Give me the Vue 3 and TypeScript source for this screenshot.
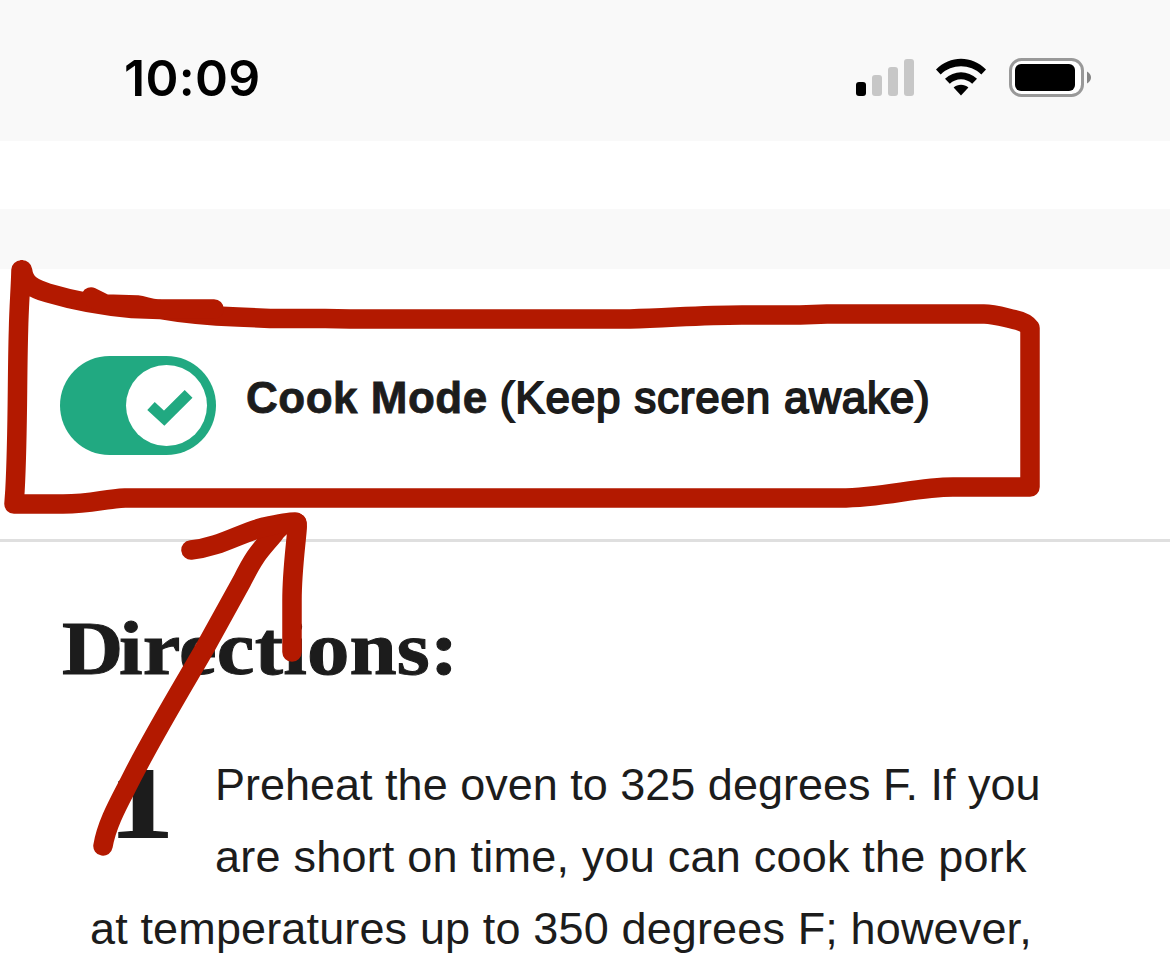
<template>
  <div class="screen">
    <header class="status-bar">
      <time class="clock">10:09</time>
      <div class="status-icons">
        <svg class="signal" width="60" height="40" viewBox="0 0 60 40">
          <rect
            v-for="(bar, i) in signalBars"
            :key="i"
            :x="i * 16"
            :y="38 - bar.height"
            width="10"
            :height="bar.height"
            rx="3"
            :fill="bar.active ? '#000' : '#c7c7c7'"
          />
        </svg>
        <svg class="wifi" width="52" height="40" viewBox="0 0 52 40">
          <path d="M1 11.5 C15 -2.8 37 -2.8 51 11.5 L46.3 16.4 C35 5.5 17 5.5 5.7 16.4 Z" />
          <path d="M10 20.8 C19 12 33 12 42 20.8 L37.2 25.8 C31 19.7 21 19.7 14.8 25.8 Z" />
          <path d="M18.6 29.6 C22.8 25.8 29.2 25.8 33.4 29.6 L26 37.5 Z" />
        </svg>
        <svg class="battery" width="84" height="40" viewBox="0 0 84 40">
          <rect x="1.5" y="1.5" width="72" height="36" rx="11" fill="#fff" stroke="#999" stroke-width="3" />
          <rect x="6" y="6" width="60" height="27" rx="6" />
          <path d="M78 13.5 Q82 16 82 19.5 Q82 23 78 25.5 Z" fill="#858585" />
        </svg>
      </div>
    </header>
    <div class="gap"></div>
    <div class="ad-band"></div>

    <section class="cook-mode">
      <button class="toggle" :class="{ on: cookMode }" @click="cookMode = !cookMode">
        <span class="knob">
          <svg v-if="cookMode" width="46" height="38" viewBox="0 0 46 38">
            <path d="M4 17 L17.2 29.2 L41.6 4.8" fill="none" stroke="#21a981" stroke-width="11" />
          </svg>
        </span>
      </button>
      <p class="cook-label"><strong>Cook Mode</strong> <span class="hint">(Keep screen awake)</span></p>
    </section>

    <main class="directions">
      <h1><span class="cap">D</span>irections:</h1>
      <div class="step">
        <span class="step-number">1</span>
        <p>
          <span class="line first">Preheat the oven to 325 degrees F. If you</span>
          <span class="line second">are short on time, you can cook the pork</span>
          <span class="line third">at temperatures up to 350 degrees F; however,</span>
        </p>
      </div>
    </main>

    <!-- hand-drawn marker strokes -->
    <svg class="marker" width="1170" height="969" viewBox="0 0 1170 969">
      <path v-for="d in strokes" :key="d" :d="d" />
    </svg>
  </div>
</template>

<script setup lang="ts">
import { ref } from 'vue';

interface SignalBar {
  height: number;
  active: boolean;
}

const cookMode = ref(true);

const signalBars: SignalBar[] = [
  { height: 14, active: true },
  { height: 21, active: false },
  { height: 29, active: false },
  { height: 37, active: false },
];

const strokes: string[] = [
  // box
  'M22.5 270 C24 284 34 289 48 293 C75 301 101 306 132 308.5 L160 309.5 C185 314 207 316 238 317 L270 318.5 L325 318.5 L350 319 L630 319 C670 318 700 315 742 315 L800 315 L827 314 L984 314 C994 314 1005 317.5 1014 319.5 Q1026 322 1030 328 L1030 487 L953 487 C916 487 884 498 840 498 L125 498 C103 499 93 504 63 504 L14 504 L15 490 C18 434 17 380 18.5 330 C19 305 20.5 290 21 270',
  'M91 297 L105 304 L137 305 C145 306 150 309 158 309 L214 309',
  // arrow
  'M103 846 C107 822 121 799 132 777 C154 734 180 691 205 648 L242 581 C256 553 260 551 274 534 C283 522 289 523 297 523',
  'M191 550 C220 547 240 533 264 527 C278 524 290 522 295 522 Q298 522 297 530 C295 552 292 574 292 600 L292 652',
];
</script>

<style>
body { background: #fff; }
</style>

<style scoped>
.screen {
  position: relative;
  width: 1170px; height: 969px;
  overflow: hidden;
  background: #fff; color: #1c1c1c;
  font-family: "Liberation Sans", Arial, sans-serif;
}

/* status bar */
.status-bar {
  box-sizing: border-box;
  height: 141px;
  padding: 0 77px 0 124px;
  display: flex; justify-content: space-between;
  background: #f9f9f9; color: #000;
}
.clock {
  margin-top: 48px;
  font: 600 50px/60px Inter, sans-serif;
  letter-spacing: 0.3px;
}
.status-icons { display: flex; height: 40px; margin-top: 58px; }
.wifi { margin-left: 19px; }
.battery { margin-left: 22px; }

.gap { height: 68px; }
.ad-band { height: 60px; background: #f9f9f9; }

/* cook mode row */
.cook-mode {
  box-sizing: border-box;
  height: 273px;
  padding: 87px 60px 0;
  display: flex; align-items: flex-start;
  border-bottom: 3px solid #dfdfdf;
}
.toggle {
  width: 156px; height: 99px;
  box-sizing: border-box;
  padding: 9px;
  border: none; border-radius: 50px;
  display: flex; align-items: center;
  background: #ccc;
  cursor: pointer;
}
.toggle.on { justify-content: flex-end; background: #21a981; }
.knob {
  width: 81px; height: 81px;
  border-radius: 50%;
  display: flex; align-items: center; justify-content: center;
  background: #fff;
}
.knob svg { margin: 4px 0 0 7px; }
.cook-label {
  margin: 12px 0 0 30px;
  font-size: 44px; line-height: 60px;
  white-space: nowrap;
}
.cook-label strong { letter-spacing: 0.5px; -webkit-text-stroke: 0.8px #1c1c1c; }
.hint { letter-spacing: 0.78px; -webkit-text-stroke: 1.8px #1c1c1c; }

/* directions */
.directions { padding: 66px 60px 0; }
h1 {
  width: max-content;
  margin: 0 0 0 2px;
  font: bold 76px/80px "Liberation Serif", "Times New Roman", serif;
  -webkit-text-stroke: 1px #1c1c1c;
  letter-spacing: 0.2px;
  transform: scaleX(1.115); transform-origin: left;
}
.cap { margin-right: -4px; }
.step { padding-left: 30px; margin-top: 61px; }
.step-number {
  float: left;
  box-sizing: border-box;
  width: 125px; height: 110px;
  padding-left: 15px;
  font: bold 100px/110px "Liberation Serif", "Times New Roman", serif;
  -webkit-text-stroke: 2px #1c1c1c;
  transform: scaleX(1.28); transform-origin: left;
}
.step p { margin: 0; font-size: 45px; line-height: 72px; }
.line { display: block; white-space: nowrap; }
.second { letter-spacing: 0.22px; }
.third { letter-spacing: 0.14px; }

.marker { position: absolute; left: 0; top: 0; pointer-events: none; }
.marker path {
  fill: none;
  stroke: #b31900; stroke-width: 19.5px;
  stroke-linecap: round; stroke-linejoin: round;
}
</style>
